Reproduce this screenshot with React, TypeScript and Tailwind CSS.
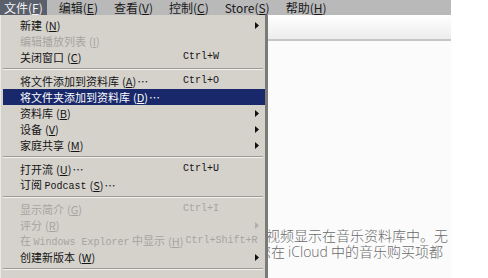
import React from "react";

const CJK = "'Noto Sans CJK SC', 'Noto Sans', sans-serif";
const MONO = "'Liberation Mono', 'DejaVu Sans Mono', monospace";

type Item =
  | { sep: true }
  | {
      sep?: false;
      label: React.ReactNode;
      key?: string;
      dots?: boolean;
      shortcut?: string;
      arrow?: boolean;
      disabled?: boolean;
      active?: boolean;
      wide?: boolean;
    };

const Arrow = ({ color }: { color: string }) => (
  <svg width="4" height="7" viewBox="0 0 4 7" className="block">
    <path d="M0 0 L4 3.5 L0 7 Z" fill={color} />
  </svg>
);

const Mn = ({ k }: { k: string }) => (
  <span className="ml-[3px]">
    (<span className="underline underline-offset-[1px]">{k}</span>)
  </span>
);

const items: Item[] = [
  { label: "新建", key: "N", arrow: true },
  { label: "编辑播放列表", key: "I", disabled: true },
  { label: "关闭窗口", key: "C", shortcut: "Ctrl+W" },
  { sep: true },
  { label: "将文件添加到资料库", key: "A", dots: true, shortcut: "Ctrl+O" },
  { label: "将文件夹添加到资料库", key: "D", dots: true, active: true },
  { label: "资料库", key: "B", arrow: true },
  { label: "设备", key: "V", arrow: true },
  { label: "家庭共享", key: "M", arrow: true },
  { sep: true },
  { label: "打开流", key: "U", dots: true, shortcut: "Ctrl+U" },
  {
    label: (
      <>
        订阅 <span style={{ fontFamily: MONO }} className="text-[10px]">Podcast</span>
      </>
    ),
    key: "S",
    dots: true,
  },
  { sep: true },
  { label: "显示简介", key: "G", shortcut: "Ctrl+I", disabled: true },
  { label: "评分", key: "R", arrow: true, disabled: true },
  {
    label: (
      <>
        在 <span style={{ fontFamily: MONO }} className="text-[10px]">Windows Explorer</span> 中显示
      </>
    ),
    key: "H",
    shortcut: "Ctrl+Shift+R",
    disabled: true,
    wide: true,
  },
  { label: "创建新版本", key: "W", arrow: true },
  { sep: true },
  { label: "", key: "" },
];

function MenuRow({ item }: { item: Item }) {
  if (item.sep) {
    return (
      <div className="h-[8px] flex flex-col justify-center pr-[2px]">
        <div className="h-px bg-[#9c9a96]" />
        <div className="h-px bg-[#f4f3f0]" />
      </div>
    );
  }
  const color = item.active ? "text-white" : item.disabled ? "text-[#a6a4a0]" : "text-[#141414]";
  return (
    <div
      className={`h-[16px] flex items-center pl-[17px] pr-[6px] ${
        item.active ? "bg-[#18286a]" : ""
      } ${color}`}
    >
      {item.label !== "" && (
        <>
          <div
            className={`${item.wide ? "" : "w-[163px]"} whitespace-nowrap flex items-center`}
          >
            <span>{item.label}</span>
            <Mn k={item.key || ""} />
            {item.dots && <span className="ml-[1px]">…</span>}
          </div>
          <div
            className={`flex-1 whitespace-nowrap text-[10px] ${item.wide ? "ml-[2px]" : ""}`}
            style={{ fontFamily: MONO }}
          >
            {item.shortcut}
          </div>
          {item.arrow && <Arrow color={item.disabled ? "#b0aeaa" : "#111"} />}
        </>
      )}
    </div>
  );
}

export default function App() {
  const menus = ["文件(F)", "编辑(E)", "查看(V)", "控制(C)", "Store(S)", "帮助(H)"];
  return (
    <div
      className="relative w-[488px] h-[278px] overflow-hidden bg-white flex"
      style={{ fontFamily: CJK }}
    >
      <div className="w-[451px] h-full flex flex-col">
        {/* menubar */}
        <div className="h-[15px] bg-[#b9b9b9] flex items-stretch text-[12px] text-[#1a1a1a] gap-[8px]">
          {menus.map((m, i) => (
            <div
              key={m}
              className={`px-[4px] flex items-center leading-none ${
                i === 0 ? "bg-[#5a5f6c] text-[#f2f2f2]" : ""
              }`}
            >
              {m.replace(/\((.)\)/, "(")}
              <span className="underline">{m.match(/\((.)\)/)?.[1]}</span>)
            </div>
          ))}
        </div>
        {/* content window */}
        <div className="flex-1 bg-[#fbfbfb] flex flex-col">
          <div className="h-[26px] bg-gradient-to-b from-[#ffffff] to-[#ececec] border-b-2 border-[#c6c6c6]" />
          <div className="flex-1 pt-[186px] text-[14px] leading-[16px] text-[#6a6a6a] font-light overflow-hidden whitespace-nowrap">
            <div className="pl-[266px] h-[16px]">视频显示在音乐资料库中。无</div>
            <div className="pl-[257px] h-[16px]">
              您在 <span style={{ fontFamily: "'Open Sans', sans-serif" }}>iCloud</span> 中的音乐购买项都
            </div>
          </div>
        </div>
      </div>

      {/* dropdown menu */}
      <div className="absolute left-0 top-[15px] w-[268px] h-[275px] bg-[#d5d2cc] border-l border-[#ebe9e5] border-r-[3px] border-r-[#7b7a78] pt-[2px] pl-[2px] text-[11px] leading-none">
        {items.map((it, i) => (
          <MenuRow key={i} item={it} />
        ))}
      </div>
    </div>
  );
}
